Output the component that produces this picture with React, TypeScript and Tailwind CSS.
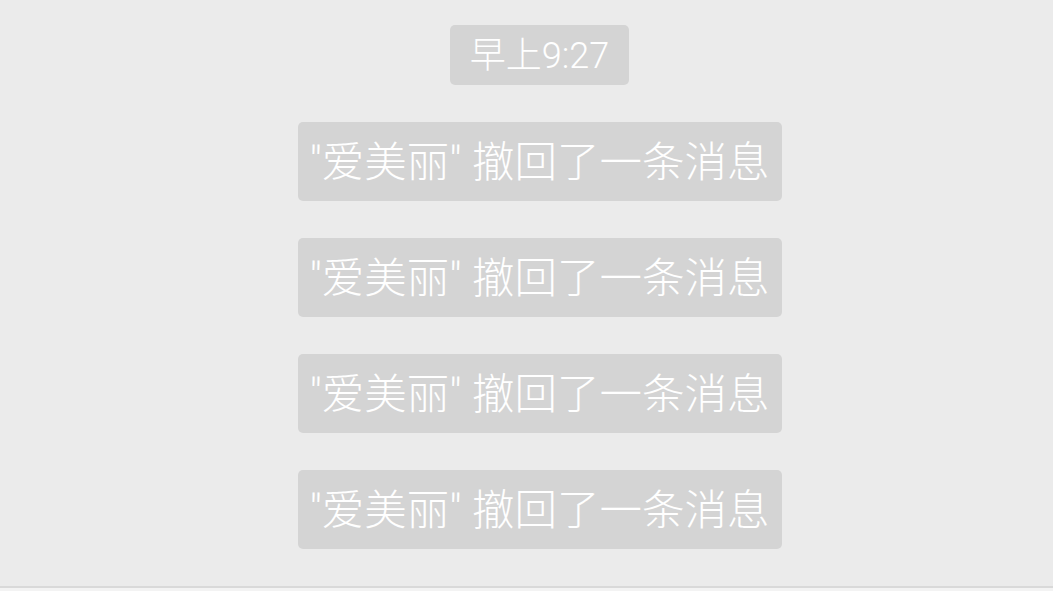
export default function App() {
  const items = [0, 1, 2, 3];
  return (
    <div
      className="w-[1053px] h-[591px] bg-[#ebebeb] flex flex-col overflow-hidden"
      style={{ fontFamily: 'Roboto, "Noto Sans CJK SC", "Noto Sans", sans-serif' }}
    >
      <div className="flex-1 flex flex-col items-center pt-[25px] pl-[26px]">
        <div className="w-[179px] h-[60px] pt-[2px] rounded-[5px] bg-[#d4d4d4] text-white text-[36px] font-light leading-none flex items-center justify-center">
          早上9:27
        </div>
        <div className="flex flex-col gap-[37px] mt-[37px]">
          {items.map((i) => (
            <div
              key={i}
              className="w-[484px] h-[79px] pt-[4px] rounded-[5px] bg-[#d4d4d4] text-white text-[42.5px] font-light leading-none flex items-center justify-center whitespace-nowrap"
            >
              "爱美丽" 撤回了一条消息
            </div>
          ))}
        </div>
      </div>
      <div className="h-[2px] bg-[#d9d9d9]" />
      <div className="h-[3px] bg-[#f3f3f3]" />
    </div>
  );
}
